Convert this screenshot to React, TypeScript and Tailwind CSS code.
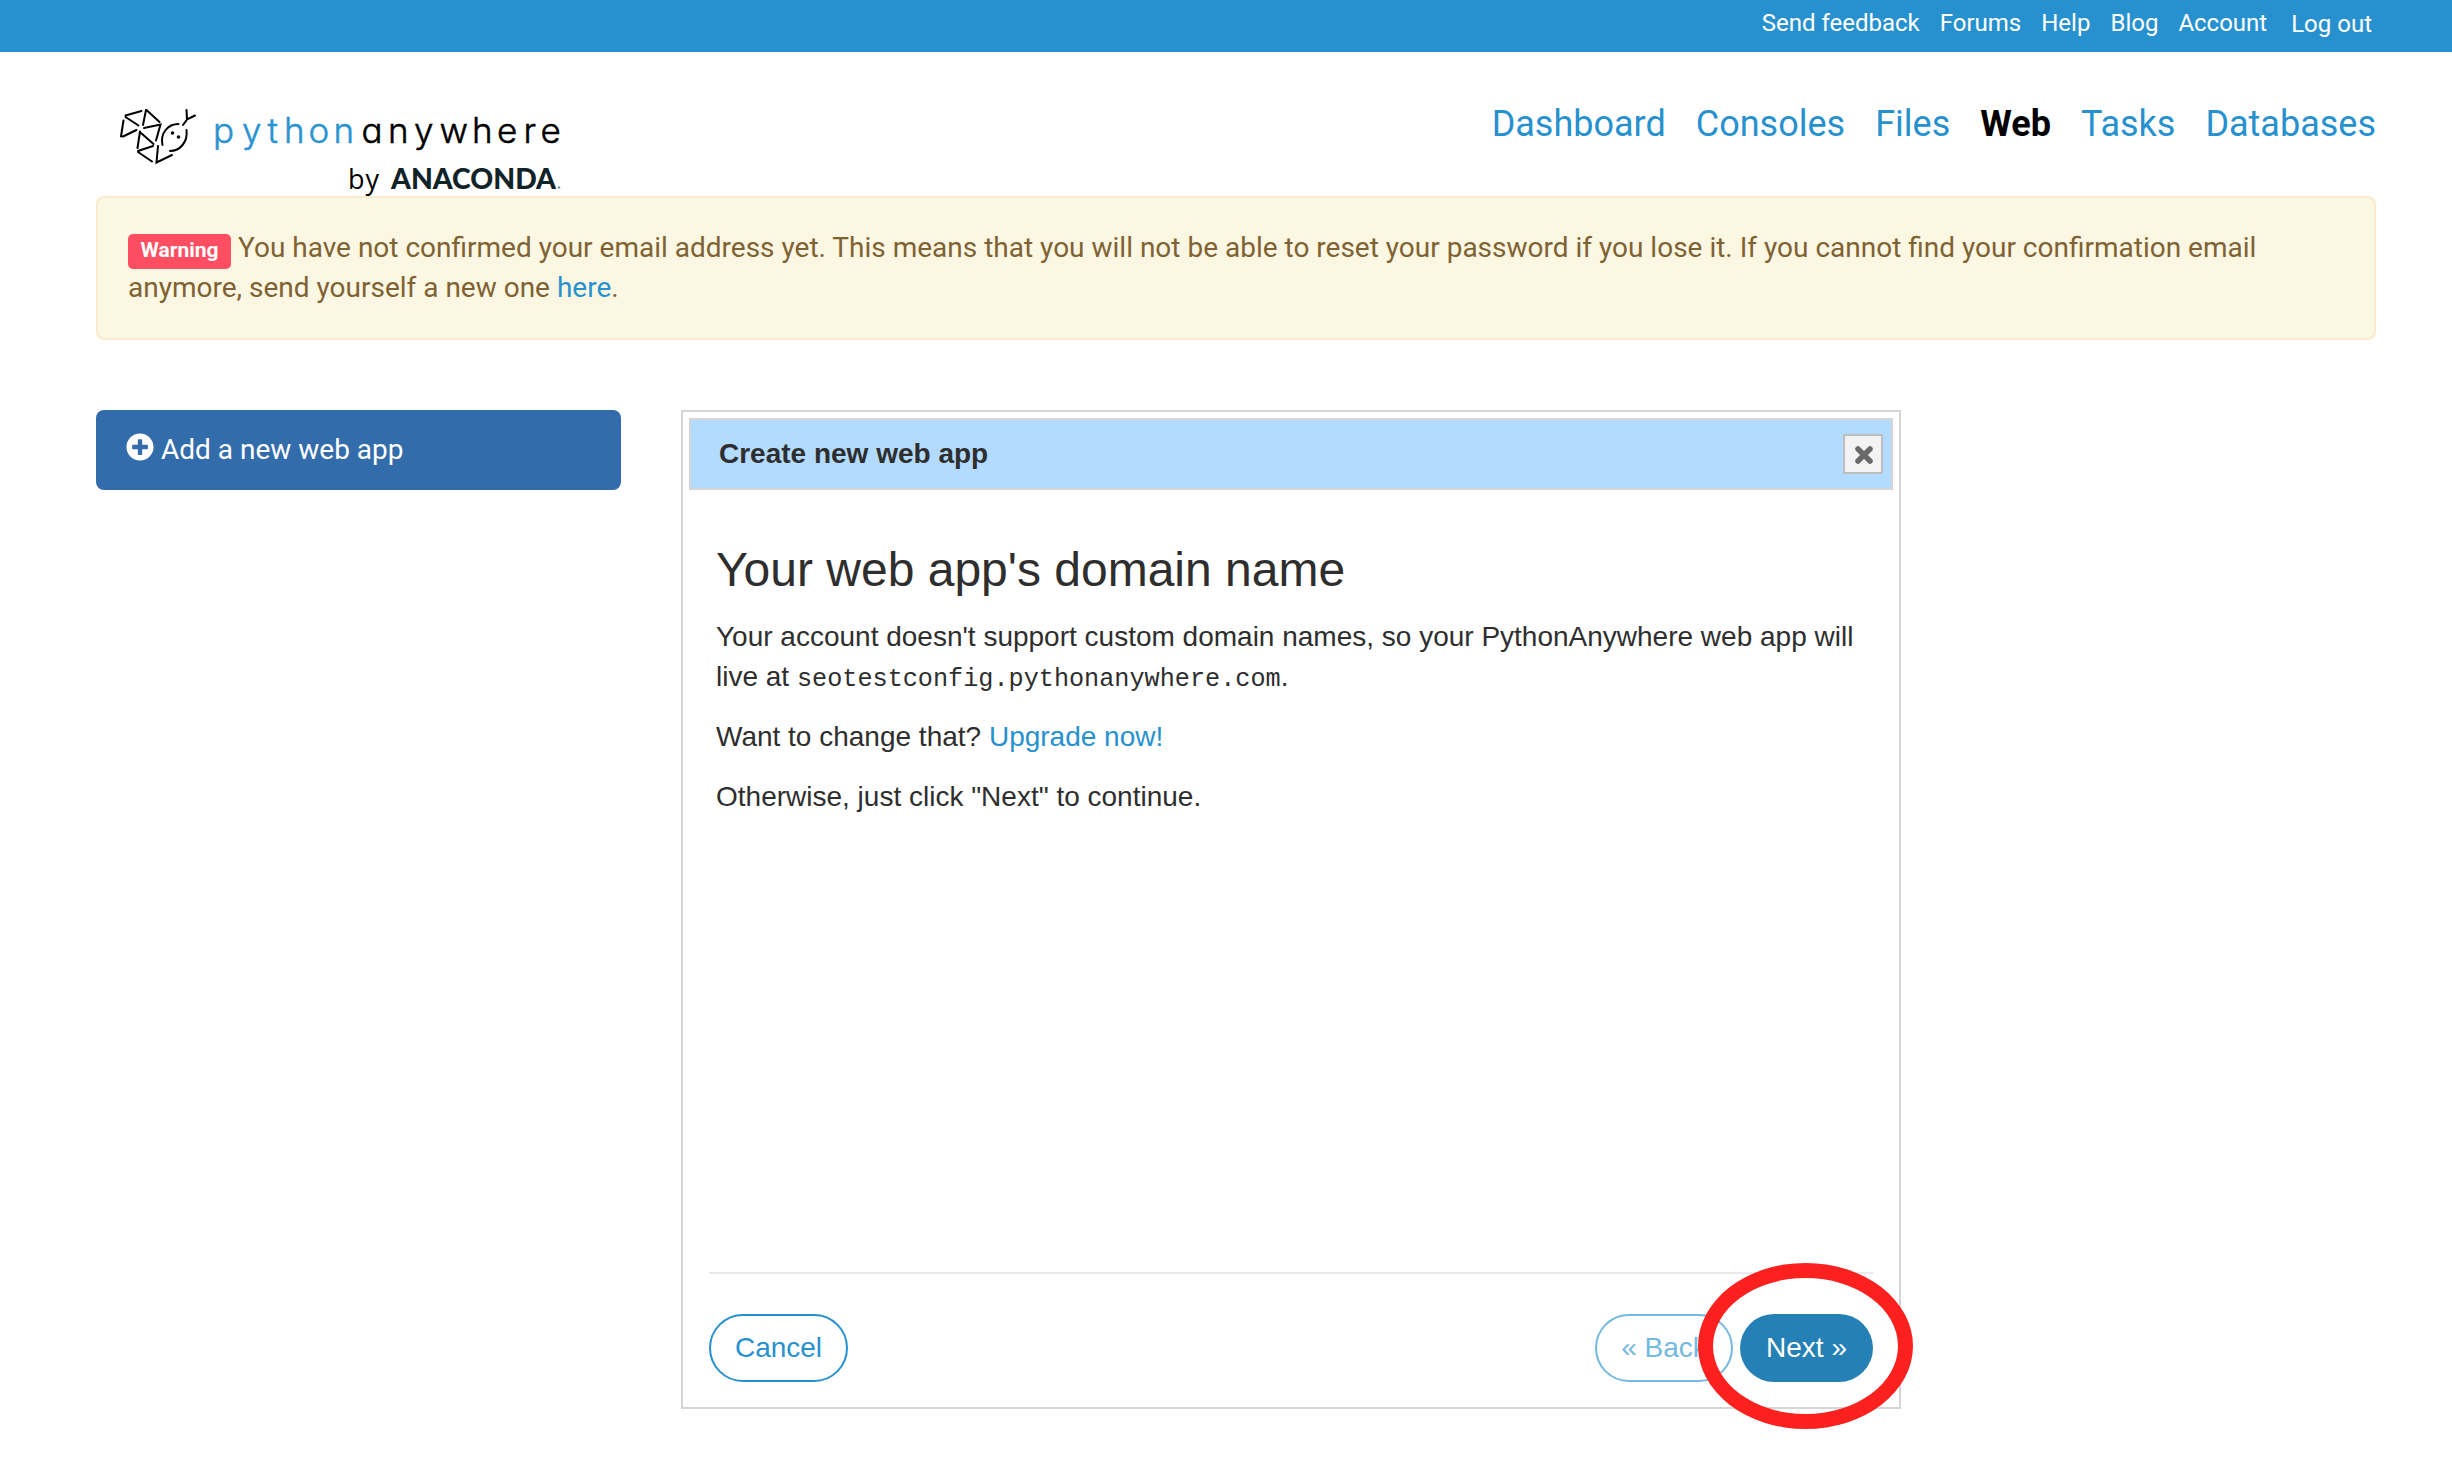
import React from "react";
import { FaPlusCircle } from "react-icons/fa";

const topLinks = ["Send feedback", "Forums", "Help", "Blog", "Account"];
const navLinks = ["Dashboard", "Consoles", "Files", "Web", "Tasks", "Databases"];

function Logo() {
  return (
    <svg width="470" height="106" viewBox="96 90 470 106" className="block overflow-visible">
      <g stroke="#000" strokeWidth="2" strokeLinecap="round" fill="none">
        <path d="M125.5 115.5L141.5 111M125.5 117L138.5 125.5M123.5 120.5L121 136.500M123 136.500L136.500 130" />
        <path d="M146 110L143 125M146.500 110L159.500 122M144 128L160.500 124.500L156 140.500M140 131.500L137.500 148M141 133L153.500 144" />
        <path d="M138 151L153 146M138 152L152 161.500M158 146L156.500 162.500L172 155" />
        <path d="M162.500 145C160 133 168 124 178.500 124M186.500 130C188 142 180 151 170 151" />
        <path d="M183 125L187 119.500M186.500 110L187 119.500L195 115.500" />
      </g>
      <circle cx="172.500" cy="133" r="1.800" />
      <circle cx="178.500" cy="137" r="1.800" />
      <g className="font-['Inter',sans-serif] text-[35px] font-light" strokeWidth="0.500">
        <text y="142.800" x="213 242 267.500 284 308.500 333.500" fill="#2a93d0" stroke="#2a93d0">python</text>
        <text y="142.800" x="361.500 388 414 439.500 472 497 523.500 540.500" fill="#000" stroke="#000" className="[font-feature-settings:'cv11']">anywhere</text>
      </g>
      <text x="348" y="188.500" className="font-['Open_Sans',sans-serif] text-[27px]" textLength="31">by</text>
      <text x="391" y="188.500" className="font-['Lato',sans-serif] text-[28px] font-black" fill="#0f2328" textLength="165" lengthAdjust="spacingAndGlyphs">ANACONDA</text>
      <circle cx="559" cy="187.500" r="1.300" fill="#7d9196" />
    </svg>
  );
}

export default function App() {
  return (
    <div className="h-[1464px] w-[2452px] overflow-hidden bg-white font-['Roboto',sans-serif] text-[#2e2e2e]">
      <div className="flex h-[52px] justify-end gap-5 bg-[#2791cf] pt-[7px] pr-20 text-2xl/8 text-white">
        {topLinks.map((t) => (
          <a key={t}>{t}</a>
        ))}
        <a className="ml-1 pt-px">Log out</a>
      </div>

      <div className="flex h-36 justify-between pr-[76px] pl-24">
        <div className="pt-[38px]">
          <Logo />
        </div>
        <nav className="flex gap-[30px] pt-[50px] text-4xl/[44px] text-[#2791cf]">
          {navLinks.map((t) => (
            <a key={t} className={t === "Web" ? "font-bold text-black" : ""}>{t}</a>
          ))}
        </nav>
      </div>

      <div className="mr-[76px] ml-24 h-36 rounded-lg border-2 border-[#faebcc] bg-[#fcf7e2] px-[30px] pt-[30px] text-[28px]/10 text-[#7f6233]">
        <p className="flex h-10 whitespace-nowrap">
          <span className="mt-[6px] mr-[7px] h-[35px] w-[103px] shrink-0 rounded-[5px] bg-[#ff4d61] text-center text-[21px]/[32px] font-bold text-white">Warning</span>
          You have not confirmed your email address yet. This means that you will not be able to reset your password if you lose it. If you cannot find your confirmation email
        </p>
        <p>
          anymore, send yourself a new one <a className="text-[#2791cf]">here</a>.
        </p>
      </div>

      <main className="mt-[70px] flex items-start gap-[60px] pl-24">
        <button className="flex h-20 w-[525px] items-center gap-[7px] rounded-lg bg-[#336cab] pl-[30px] text-[28px] text-white">
          <FaPlusCircle className="-mt-1.5 size-7" />
          Add a new web app
        </button>

        <section className="relative h-[999px] w-[1220px] border-2 border-[#d5d5d5] px-1.5 pt-1.5 font-['Liberation_Sans',sans-serif]">
          <header className="flex h-[72px] items-center justify-between border-2 border-[#d5d5d5] bg-[#b3daff] pr-2 pl-7">
            <h2 className="text-[28px] font-bold">Create new web app</h2>
            <button className="flex size-10 items-center justify-center border-2 border-[#bdbdbd] bg-[#f3f3f3]">
              <svg width="20" height="20" viewBox="0 0 20 20" stroke="#696969" strokeWidth="5.500" strokeLinecap="round" className="mt-0.5 ml-px">
                <path d="M4 4L16 16M16 4L4 16" />
              </svg>
            </button>
          </header>

          <div className="h-[782px] pt-[53px] pr-7 pl-[27px] text-[28px]/10">
            <h1 className="text-5xl/[53px]">Your web app's domain name</h1>
            <p className="mt-[21px]">
              Your account doesn't support custom domain names, so your PythonAnywhere web app will
            </p>
            <p className="h-10">
              live at <code className="font-['Liberation_Mono',monospace] text-[25.2px]/[1]">seotestconfig.pythonanywhere.com</code>.
            </p>
            <p className="mt-5">Want to change that? <a className="text-[#2791cf]">Upgrade now!</a></p>
            <p className="mt-5">Otherwise, just click "Next" to continue.</p>
          </div>

          <footer className="mx-5 flex justify-between border-t-2 border-[#eaeaea] pt-10 text-[28px]">
            <button className="h-[68px] w-[139px] rounded-full border-2 border-[#2791cf] text-[#2791cf]">Cancel</button>
            <div className="flex gap-[7px]">
              <button className="h-[68px] w-[138px] rounded-full border-2 border-[#73b9e0] text-[#73b9e0]">« Back</button>
              <button className="h-[68px] w-[133px] rounded-full bg-[#2480b5] text-white">Next »</button>
            </div>
          </footer>
          <div className="absolute top-[851px] left-[1015px] h-[166px] w-[215px] rounded-[50%] border-[15px] border-[#fc201f]" />
        </section>
      </main>
    </div>
  );
}
